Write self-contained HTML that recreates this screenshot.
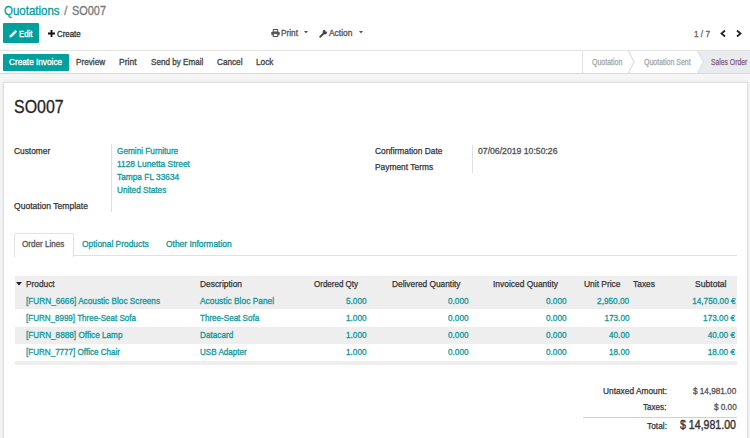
<!DOCTYPE html>
<html><head><meta charset="utf-8">
<style>
html,body{margin:0;padding:0;width:750px;height:438px;overflow:hidden;background:#fff;}
body{position:relative;font-family:"Liberation Sans",sans-serif;}
.t{position:absolute;white-space:nowrap;line-height:1;display:inline-block;}
.r{position:absolute;}
</style></head><body>
<!-- control panel border -->
<div class="r" style="left:0;top:50px;width:750px;height:1px;background:#e2e2e2"></div>
<!-- edit button -->
<div class="r" style="left:3px;top:23px;width:36px;height:20px;background:#00A09D;border-radius:1px"></div>
<svg class="r" style="left:9px;top:29px" width="9" height="9" viewBox="0 0 9 9"><path d="M0.4 8.6 L0.98 6.18 L6.28 0.88 L8.12 2.72 L2.82 8.02 Z" fill="#fff"/><path d="M5.2 1.96 L7.04 3.8" stroke="#00A09D" stroke-width="0.5"/></svg>
<!-- plus -->
<svg class="r" style="left:48px;top:30px" width="7" height="7" viewBox="0 0 7 7"><path d="M2.6 0h1.8v2.6H7v1.8H4.4V7H2.6V4.4H0V2.6h2.6z" fill="#111"/></svg>
<!-- print icon -->
<svg class="r" style="left:271px;top:29px" width="9" height="8" viewBox="0 0 9 8"><rect x="2.3" y="0.5" width="4.4" height="2.6" fill="none" stroke="#555" stroke-width="1"/><rect x="0.3" y="2.8" width="8.4" height="3.4" rx="0.8" fill="#555"/><rect x="2.3" y="4.6" width="4.4" height="2.9" fill="#fff" stroke="#555" stroke-width="1"/></svg>
<svg class="r" style="left:304px;top:31px" width="4" height="3" viewBox="0 0 4 3"><path d="M0 0h4L2 2.5z" fill="#555"/></svg>
<!-- wrench -->
<svg class="r" style="left:319px;top:29px" width="9" height="9" viewBox="0 0 9 9"><path d="M1.2 7.8 L5 4" stroke="#444" stroke-width="1.9" stroke-linecap="round"/><circle cx="5.9" cy="3.1" r="2.3" fill="#444"/><circle cx="7.5" cy="1.5" r="1.35" fill="#fff"/></svg>
<svg class="r" style="left:358.5px;top:31px" width="4" height="3" viewBox="0 0 4 3"><path d="M0 0h4L2 2.5z" fill="#555"/></svg>
<!-- pager arrows -->
<svg class="r" style="left:720px;top:30px" width="6" height="7" viewBox="0 0 6 7"><path d="M5 0.5 L1.5 3.5 L5 6.5" stroke="#222" stroke-width="1.8" fill="none"/></svg>
<svg class="r" style="left:736px;top:30px" width="6" height="7" viewBox="0 0 6 7"><path d="M1 0.5 L4.5 3.5 L1 6.5" stroke="#222" stroke-width="1.8" fill="none"/></svg>
<!-- statusbar -->
<div class="r" style="left:3px;top:54px;width:66px;height:16.5px;background:#00A09D;border-radius:1px"></div>
<div class="r" style="left:0;top:73px;width:750px;height:1px;background:#d9d9d9"></div>
<div class="r" style="left:582px;top:51px;width:1px;height:22px;background:#e2e2e2"></div>
<svg class="r" style="left:583px;top:51px" width="167" height="22" viewBox="0 0 167 22">
  <path d="M114.5 0 H167 V22 H114.5 L120.5 11 Z" fill="#e9ecef"/>
  <path d="M45.5 0 L51 11 L45.5 22" stroke="#e3e3e3" fill="none" stroke-width="1.6"/>
  <path d="M114.5 0 L120.5 11 L114.5 22" stroke="#e0e2e4" fill="none" stroke-width="1.4"/>
</svg>
<!-- form background -->
<div class="r" style="left:0;top:74px;width:750px;height:364px;background:#f5f5f5"></div>
<!-- sheet -->
<div class="r" style="left:3px;top:82px;width:743px;height:400px;background:#fff;border:1px solid #dedede;box-shadow:0 0 3px rgba(0,0,0,0.08)"></div>
<!-- field separators -->
<div class="r" style="left:111px;top:144px;width:1px;height:68px;background:#e0e0e0"></div>
<div class="r" style="left:472px;top:145px;width:1px;height:28px;background:#e0e0e0"></div>
<!-- tabs -->
<div class="r" style="left:14px;top:255px;width:723px;height:1px;background:#e0e0e0"></div>
<div class="r" style="left:14px;top:233px;width:58px;height:23px;background:#fff;border:1px solid #e0e0e0;border-bottom:none;border-radius:2px 2px 0 0"></div>
<!-- table -->
<div class="r" style="left:15px;top:276px;width:722px;height:33px;background:#eeeeee"></div>
<div class="r" style="left:15px;top:326.5px;width:722px;height:17px;background:#eeeeee"></div>
<div class="r" style="left:15px;top:361px;width:722px;height:4px;background:#eeeeee"></div>
<svg class="r" style="left:16px;top:282px" width="6" height="4" viewBox="0 0 6 4"><path d="M0 0h6L3 3.5z" fill="#222"/></svg>
<!-- totals line -->
<div class="r" style="left:583px;top:416.5px;width:154px;height:1px;background:#d0d0d0"></div>

<span class="t" id="t0" style="left:3.50px;transform-origin:0 0;top:4.20px;font-size:13px;color:#00A09D;font-weight:normal;-webkit-text-stroke:0.32px currentColor;transform:scaleX(0.8843);">Quotations</span>
<span class="t" id="t1" style="left:63.50px;transform-origin:0 0;top:4.20px;font-size:13px;color:#888;font-weight:normal;-webkit-text-stroke:0.32px currentColor;transform:scaleX(0.9379);">/</span>
<span class="t" id="t2" style="left:71.90px;transform-origin:0 0;top:4.20px;font-size:13px;color:#777;font-weight:normal;-webkit-text-stroke:0.32px currentColor;transform:scaleX(0.8398);">SO007</span>
<span class="t" id="t3" style="left:19.20px;transform-origin:0 0;top:29.68px;font-size:9px;color:#fff;font-weight:normal;-webkit-text-stroke:0.32px currentColor;transform:scaleX(0.8572);">Edit</span>
<span class="t" id="t4" style="left:56.50px;transform-origin:0 0;top:29.68px;font-size:9px;color:#333;font-weight:normal;-webkit-text-stroke:0.32px currentColor;transform:scaleX(0.8773);">Create</span>
<span class="t" id="t5" style="left:280.50px;transform-origin:0 0;top:29.18px;font-size:9px;color:#555;font-weight:normal;-webkit-text-stroke:0.32px currentColor;transform:scaleX(0.9181);">Print</span>
<span class="t" id="t6" style="left:329.10px;transform-origin:0 0;top:29.18px;font-size:9px;color:#555;font-weight:normal;-webkit-text-stroke:0.32px currentColor;transform:scaleX(0.9354);">Action</span>
<span class="t" id="t7" style="left:693.50px;transform-origin:0 0;top:29.78px;font-size:9px;color:#666;font-weight:normal;-webkit-text-stroke:0.32px currentColor;transform:scaleX(0.9135);">1 / 7</span>
<span class="t" id="t8" style="left:9.10px;transform-origin:0 0;top:57.98px;font-size:9px;color:#fff;font-weight:normal;-webkit-text-stroke:0.32px currentColor;transform:scaleX(0.9150);">Create Invoice</span>
<span class="t" id="t9" style="left:76.40px;transform-origin:0 0;top:57.98px;font-size:9px;color:#444;font-weight:normal;-webkit-text-stroke:0.32px currentColor;transform:scaleX(0.9089);">Preview</span>
<span class="t" id="t10" style="left:119.30px;transform-origin:0 0;top:57.98px;font-size:9px;color:#444;font-weight:normal;-webkit-text-stroke:0.32px currentColor;transform:scaleX(0.9451);">Print</span>
<span class="t" id="t11" style="left:150.50px;transform-origin:0 0;top:57.98px;font-size:9px;color:#444;font-weight:normal;-webkit-text-stroke:0.32px currentColor;transform:scaleX(0.9012);">Send by Email</span>
<span class="t" id="t12" style="left:216.50px;transform-origin:0 0;top:57.98px;font-size:9px;color:#444;font-weight:normal;-webkit-text-stroke:0.32px currentColor;transform:scaleX(0.9102);">Cancel</span>
<span class="t" id="t13" style="left:255.80px;transform-origin:0 0;top:57.98px;font-size:9px;color:#444;font-weight:normal;-webkit-text-stroke:0.32px currentColor;transform:scaleX(0.9203);">Lock</span>
<span class="t" id="t14" style="left:592.30px;transform-origin:0 0;top:57.98px;font-size:9px;color:#aaa;font-weight:normal;-webkit-text-stroke:0.32px currentColor;transform:scaleX(0.7789);">Quotation</span>
<span class="t" id="t15" style="left:643.80px;transform-origin:0 0;top:57.98px;font-size:9px;color:#aaa;font-weight:normal;-webkit-text-stroke:0.32px currentColor;transform:scaleX(0.7777);">Quotation Sent</span>
<span class="t" id="t16" style="left:711.30px;transform-origin:0 0;top:57.98px;font-size:9px;color:#875A7B;font-weight:normal;-webkit-text-stroke:0.25px currentColor;transform:scaleX(0.7537);">Sales Order</span>
<span class="t" id="t17" style="left:13.90px;transform-origin:0 0;top:96.62px;font-size:19px;color:#222;font-weight:normal;-webkit-text-stroke:0.32px currentColor;transform:scaleX(0.8385);">SO007</span>
<span class="t" id="t18" style="left:14.20px;transform-origin:0 0;top:147.38px;font-size:9px;color:#333;font-weight:normal;-webkit-text-stroke:0.25px currentColor;transform:scaleX(0.9278);">Customer</span>
<span class="t" id="t19" style="left:13.80px;transform-origin:0 0;top:201.68px;font-size:9px;color:#333;font-weight:normal;-webkit-text-stroke:0.25px currentColor;transform:scaleX(0.9501);">Quotation Template</span>
<span class="t" id="t20" style="left:116.60px;transform-origin:0 0;top:147.38px;font-size:9px;color:#12989c;font-weight:normal;-webkit-text-stroke:0.32px currentColor;transform:scaleX(0.9130);">Gemini Furniture</span>
<span class="t" id="t21" style="left:116.60px;transform-origin:0 0;top:160.38px;font-size:9px;color:#12989c;font-weight:normal;-webkit-text-stroke:0.32px currentColor;transform:scaleX(0.9298);">1128 Lunetta Street</span>
<span class="t" id="t22" style="left:116.60px;transform-origin:0 0;top:173.08px;font-size:9px;color:#12989c;font-weight:normal;-webkit-text-stroke:0.32px currentColor;transform:scaleX(0.9253);">Tampa FL 33634</span>
<span class="t" id="t23" style="left:116.60px;transform-origin:0 0;top:185.98px;font-size:9px;color:#12989c;font-weight:normal;-webkit-text-stroke:0.32px currentColor;transform:scaleX(0.9124);">United States</span>
<span class="t" id="t24" style="left:375.40px;transform-origin:0 0;top:147.48px;font-size:9px;color:#333;font-weight:normal;-webkit-text-stroke:0.25px currentColor;transform:scaleX(0.9291);">Confirmation Date</span>
<span class="t" id="t25" style="left:375.40px;transform-origin:0 0;top:163.28px;font-size:9px;color:#333;font-weight:normal;-webkit-text-stroke:0.25px currentColor;transform:scaleX(0.9317);">Payment Terms</span>
<span class="t" id="t26" style="left:477.50px;transform-origin:0 0;top:147.48px;font-size:9px;color:#555;font-weight:normal;-webkit-text-stroke:0.32px currentColor;transform:scaleX(0.9627);">07/06/2019 10:50:26</span>
<span class="t" id="t27" style="left:22.20px;transform-origin:0 0;top:240.08px;font-size:9px;color:#555;font-weight:normal;-webkit-text-stroke:0.32px currentColor;transform:scaleX(0.8994);">Order Lines</span>
<span class="t" id="t28" style="left:81.80px;transform-origin:0 0;top:240.08px;font-size:9px;color:#12989c;font-weight:normal;-webkit-text-stroke:0.32px currentColor;transform:scaleX(0.9323);">Optional Products</span>
<span class="t" id="t29" style="left:165.50px;transform-origin:0 0;top:240.08px;font-size:9px;color:#12989c;font-weight:normal;-webkit-text-stroke:0.32px currentColor;transform:scaleX(0.9382);">Other Information</span>
<span class="t" id="t30" style="left:26.20px;transform-origin:0 0;top:280.38px;font-size:9px;color:#333;font-weight:normal;-webkit-text-stroke:0.25px currentColor;transform:scaleX(0.9217);">Product</span>
<span class="t" id="t31" style="left:199.50px;transform-origin:0 0;top:280.38px;font-size:9px;color:#333;font-weight:normal;-webkit-text-stroke:0.25px currentColor;transform:scaleX(0.9327);">Description</span>
<span class="t" id="t32" style="left:313.60px;transform-origin:0 0;top:280.38px;font-size:9px;color:#333;font-weight:normal;-webkit-text-stroke:0.25px currentColor;transform:scaleX(0.8883);">Ordered Qty</span>
<span class="t" id="t33" style="left:392.00px;transform-origin:0 0;top:280.38px;font-size:9px;color:#333;font-weight:normal;-webkit-text-stroke:0.25px currentColor;transform:scaleX(0.9251);">Delivered Quantity</span>
<span class="t" id="t34" style="left:493.00px;transform-origin:0 0;top:280.38px;font-size:9px;color:#333;font-weight:normal;-webkit-text-stroke:0.25px currentColor;transform:scaleX(0.9346);">Invoiced Quantity</span>
<span class="t" id="t35" style="left:583.50px;transform-origin:0 0;top:280.38px;font-size:9px;color:#333;font-weight:normal;-webkit-text-stroke:0.25px currentColor;transform:scaleX(0.9355);">Unit Price</span>
<span class="t" id="t36" style="left:633.00px;transform-origin:0 0;top:280.38px;font-size:9px;color:#333;font-weight:normal;-webkit-text-stroke:0.25px currentColor;transform:scaleX(0.9355);">Taxes</span>
<span class="t" id="t37" style="left:694.50px;transform-origin:0 0;top:280.38px;font-size:9px;color:#333;font-weight:normal;-webkit-text-stroke:0.25px currentColor;transform:scaleX(0.9536);">Subtotal</span>
<span class="t" id="t38" style="left:25.50px;transform-origin:0 0;top:296.88px;font-size:9px;color:#12989c;font-weight:normal;-webkit-text-stroke:0.32px currentColor;transform:scaleX(0.9142);">[FURN_6666] Acoustic Bloc Screens</span>
<span class="t" id="t39" style="left:199.50px;transform-origin:0 0;top:296.88px;font-size:9px;color:#12989c;font-weight:normal;-webkit-text-stroke:0.32px currentColor;transform:scaleX(0.9315);">Acoustic Bloc Panel</span>
<span class="t" id="t40" style="right:383.20px;transform-origin:100% 0;top:296.88px;font-size:9px;color:#12989c;font-weight:normal;-webkit-text-stroke:0.32px currentColor;transform:scaleX(0.9115);">5.000</span>
<span class="t" id="t41" style="right:281.00px;transform-origin:100% 0;top:296.88px;font-size:9px;color:#12989c;font-weight:normal;-webkit-text-stroke:0.32px currentColor;transform:scaleX(0.9115);">0.000</span>
<span class="t" id="t42" style="right:183.00px;transform-origin:100% 0;top:296.88px;font-size:9px;color:#12989c;font-weight:normal;-webkit-text-stroke:0.32px currentColor;transform:scaleX(0.9115);">0.000</span>
<span class="t" id="t43" style="right:120.50px;transform-origin:100% 0;top:296.88px;font-size:9px;color:#12989c;font-weight:normal;-webkit-text-stroke:0.32px currentColor;transform:scaleX(0.9115);">2,950.00</span>
<span class="t" id="t44" style="right:14.50px;transform-origin:100% 0;top:296.88px;font-size:9px;color:#12989c;font-weight:normal;-webkit-text-stroke:0.32px currentColor;transform:scaleX(0.9115);">14,750.00 €</span>
<span class="t" id="t45" style="left:25.50px;transform-origin:0 0;top:313.88px;font-size:9px;color:#12989c;font-weight:normal;-webkit-text-stroke:0.32px currentColor;transform:scaleX(0.8914);">[FURN_8999] Three-Seat Sofa</span>
<span class="t" id="t46" style="left:199.50px;transform-origin:0 0;top:313.88px;font-size:9px;color:#12989c;font-weight:normal;-webkit-text-stroke:0.32px currentColor;transform:scaleX(0.8963);">Three-Seat Sofa</span>
<span class="t" id="t47" style="right:383.20px;transform-origin:100% 0;top:313.88px;font-size:9px;color:#12989c;font-weight:normal;-webkit-text-stroke:0.32px currentColor;transform:scaleX(0.9115);">1.000</span>
<span class="t" id="t48" style="right:281.00px;transform-origin:100% 0;top:313.88px;font-size:9px;color:#12989c;font-weight:normal;-webkit-text-stroke:0.32px currentColor;transform:scaleX(0.9115);">0.000</span>
<span class="t" id="t49" style="right:183.00px;transform-origin:100% 0;top:313.88px;font-size:9px;color:#12989c;font-weight:normal;-webkit-text-stroke:0.32px currentColor;transform:scaleX(0.9115);">0.000</span>
<span class="t" id="t50" style="right:120.50px;transform-origin:100% 0;top:313.88px;font-size:9px;color:#12989c;font-weight:normal;-webkit-text-stroke:0.32px currentColor;transform:scaleX(0.9115);">173.00</span>
<span class="t" id="t51" style="right:14.50px;transform-origin:100% 0;top:313.88px;font-size:9px;color:#12989c;font-weight:normal;-webkit-text-stroke:0.32px currentColor;transform:scaleX(0.9115);">173.00 €</span>
<span class="t" id="t52" style="left:25.50px;transform-origin:0 0;top:330.88px;font-size:9px;color:#12989c;font-weight:normal;-webkit-text-stroke:0.32px currentColor;transform:scaleX(0.9113);">[FURN_8888] Office Lamp</span>
<span class="t" id="t53" style="left:199.50px;transform-origin:0 0;top:330.88px;font-size:9px;color:#12989c;font-weight:normal;-webkit-text-stroke:0.32px currentColor;transform:scaleX(0.9115);">Datacard</span>
<span class="t" id="t54" style="right:383.20px;transform-origin:100% 0;top:330.88px;font-size:9px;color:#12989c;font-weight:normal;-webkit-text-stroke:0.32px currentColor;transform:scaleX(0.9115);">1.000</span>
<span class="t" id="t55" style="right:281.00px;transform-origin:100% 0;top:330.88px;font-size:9px;color:#12989c;font-weight:normal;-webkit-text-stroke:0.32px currentColor;transform:scaleX(0.9115);">0.000</span>
<span class="t" id="t56" style="right:183.00px;transform-origin:100% 0;top:330.88px;font-size:9px;color:#12989c;font-weight:normal;-webkit-text-stroke:0.32px currentColor;transform:scaleX(0.9115);">0.000</span>
<span class="t" id="t57" style="right:120.50px;transform-origin:100% 0;top:330.88px;font-size:9px;color:#12989c;font-weight:normal;-webkit-text-stroke:0.32px currentColor;transform:scaleX(0.9115);">40.00</span>
<span class="t" id="t58" style="right:14.50px;transform-origin:100% 0;top:330.88px;font-size:9px;color:#12989c;font-weight:normal;-webkit-text-stroke:0.32px currentColor;transform:scaleX(0.9115);">40.00 €</span>
<span class="t" id="t59" style="left:25.50px;transform-origin:0 0;top:347.78px;font-size:9px;color:#12989c;font-weight:normal;-webkit-text-stroke:0.32px currentColor;transform:scaleX(0.8962);">[FURN_7777] Office Chair</span>
<span class="t" id="t60" style="left:199.50px;transform-origin:0 0;top:347.78px;font-size:9px;color:#12989c;font-weight:normal;-webkit-text-stroke:0.32px currentColor;transform:scaleX(0.8975);">USB Adapter</span>
<span class="t" id="t61" style="right:383.20px;transform-origin:100% 0;top:347.78px;font-size:9px;color:#12989c;font-weight:normal;-webkit-text-stroke:0.32px currentColor;transform:scaleX(0.9115);">1.000</span>
<span class="t" id="t62" style="right:281.00px;transform-origin:100% 0;top:347.78px;font-size:9px;color:#12989c;font-weight:normal;-webkit-text-stroke:0.32px currentColor;transform:scaleX(0.9115);">0.000</span>
<span class="t" id="t63" style="right:183.00px;transform-origin:100% 0;top:347.78px;font-size:9px;color:#12989c;font-weight:normal;-webkit-text-stroke:0.32px currentColor;transform:scaleX(0.9115);">0.000</span>
<span class="t" id="t64" style="right:120.50px;transform-origin:100% 0;top:347.78px;font-size:9px;color:#12989c;font-weight:normal;-webkit-text-stroke:0.32px currentColor;transform:scaleX(0.9115);">18.00</span>
<span class="t" id="t65" style="right:14.50px;transform-origin:100% 0;top:347.78px;font-size:9px;color:#12989c;font-weight:normal;-webkit-text-stroke:0.32px currentColor;transform:scaleX(0.9115);">18.00 €</span>
<span class="t" id="t66" style="left:602.80px;transform-origin:0 0;top:386.78px;font-size:9px;color:#333;font-weight:normal;-webkit-text-stroke:0.25px currentColor;transform:scaleX(0.9269);">Untaxed Amount:</span>
<span class="t" id="t67" style="left:693.00px;transform-origin:0 0;top:386.78px;font-size:9px;color:#555;font-weight:normal;-webkit-text-stroke:0.32px currentColor;transform:scaleX(0.9086);">$ 14,981.00</span>
<span class="t" id="t68" style="left:643.40px;transform-origin:0 0;top:402.88px;font-size:9px;color:#333;font-weight:normal;-webkit-text-stroke:0.25px currentColor;transform:scaleX(0.8995);">Taxes:</span>
<span class="t" id="t69" style="left:713.50px;transform-origin:0 0;top:402.88px;font-size:9px;color:#555;font-weight:normal;-webkit-text-stroke:0.32px currentColor;transform:scaleX(0.9069);">$ 0.00</span>
<span class="t" id="t70" style="left:646.80px;transform-origin:0 0;top:422.18px;font-size:9px;color:#333;font-weight:normal;-webkit-text-stroke:0.25px currentColor;transform:scaleX(0.9296);">Total:</span>
<span class="t" id="t71" style="left:680.20px;transform-origin:0 0;top:419.22px;font-size:12.5px;color:#333;font-weight:normal;-webkit-text-stroke:0.4px currentColor;transform:scaleX(0.8479);">$ 14,981.00</span>
</body></html>
